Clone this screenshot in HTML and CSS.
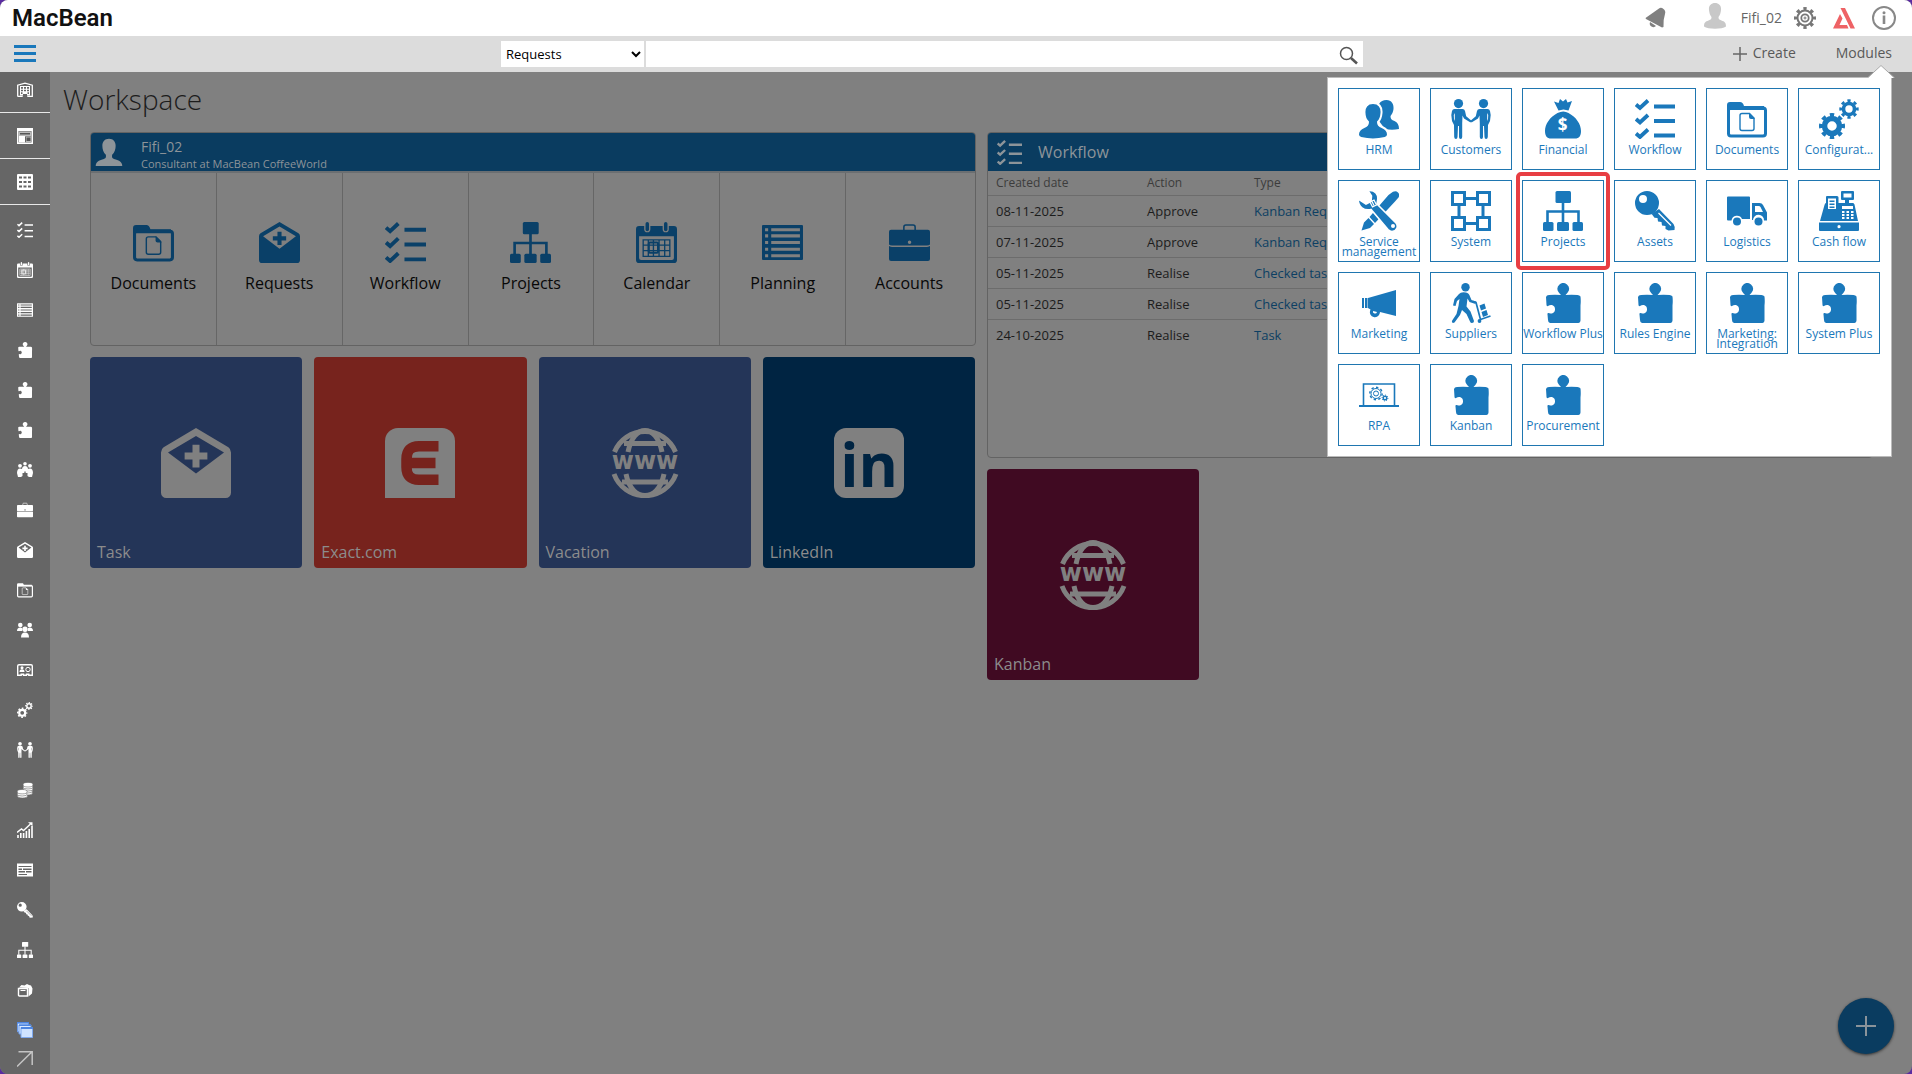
FILE: index.html
```
<!DOCTYPE html>
<html lang="en">
<head>
<meta charset="utf-8">
<title>MacBean - Workspace</title>
<link rel="stylesheet" href="styles.css">
</head>
<body>
<svg class="sprite" aria-hidden="true">
  <symbol id="i-check" viewBox="0 0 40 40"><g fill="none" stroke="currentColor" stroke-width="3.8"><path d="M1 5.5 5 9l8-7.5M1 20l4 3.500 8-7.500M1 34.500 5 38l8-7.500M19 7.500h21M19 22h21M19 36.500h21"/></g></symbol>
  <symbol id="i-folder" viewBox="0 0 40 40"><path fill="currentColor" d="M0 10V6a3 3 0 0 1 3-3h10c2 0 3 1 4 4h20v4H0z"/><rect x="1.500" y="9" width="37" height="28" rx="2.500" fill="none" stroke="currentColor" stroke-width="3"/><path d="M15 14.500h7.500l4.500 4.500v10.500a2 2 0 0 1-2 2H15a2 2 0 0 1-2-2v-13a2 2 0 0 1 2-2z" fill="none" stroke="currentColor" stroke-width="1.400"/><path fill="currentColor" d="M22 14l6 6h-4a2 2 0 0 1-2-2z"/></symbol>
  <symbol id="i-mail" viewBox="0 0 40 40"><path fill="currentColor" fill-rule="evenodd" d="M20 0 38.500 11Q40 12 40 14v23a3 3 0 0 1-3 3H3a3 3 0 0 1-3-3V14q0-2 1.500-3zM20 4.500 4 14l16 12 16-12zM18 9.500h4V14h4.500v4H22v4.500h-4V18h-4.500v-4H18z"/></symbol>
  <symbol id="i-org" viewBox="0 0 40 40"><g fill="currentColor"><rect x="12.500" width="15.500" height="12" rx="1.500"/><rect y="31" width="10.500" height="9" rx="1.500"/><rect x="14" y="31" width="12" height="9" rx="1.500"/><rect x="29.500" y="31" width="10.500" height="9" rx="1.500"/></g><path d="M20 11v21M4.500 32V20.500h31V32" fill="none" stroke="currentColor" stroke-width="2.600"/></symbol>
  <symbol id="i-calendar" viewBox="0 0 40 40"><path fill="currentColor" fill-rule="evenodd" d="M3 4h5v3a3 3 0 0 0 6 0V4h12v3a3 3 0 0 0 6 0V4h5a3 3 0 0 1 3 3v30a3 3 0 0 1-3 3H3a3 3 0 0 1-3-3V7a3 3 0 0 1 3-3zm0 10v21a2 2 0 0 0 2 2h30a2 2 0 0 0 2-2V14z"/><rect x="9.300" width="3.400" height="9" rx="1.700" fill="currentColor"/><rect x="27.300" width="3.400" height="9" rx="1.700" fill="currentColor"/><path d="M7 17.500h26v16H7zM7 22.500h26M7 28h26M12 17.500v16M17 17.500v16M22.500 17.500v16M28 17.500v16" fill="none" stroke="currentColor" stroke-width="1.300"/><rect x="12.500" y="20" width="9" height="10" rx="1" fill="none" stroke="currentColor" stroke-width="2"/></symbol>
  <symbol id="i-list" viewBox="0 0 40 40"><path fill="currentColor" fill-rule="evenodd" d="M1 3h38q1 0 1 1v32q0 1-1 1H1q-1 0-1-1V4q0-1 1-1zM3 6v3h3V6zm6 0v3h28V6zM3 12v3h3v-3zm6 0v3h28v-3zM3 18.500v3h3v-3zm6 0v3h28v-3zM3 25v3h3v-3zm6 0v3h28v-3zM3 31.500v3h3v-3zm6 0v3h28v-3z"/></symbol>
  <symbol id="i-case" viewBox="0 0 40 40"><path d="M14.500 8V5q0-2 2-2h7q2 0 2 2v3" fill="none" stroke="currentColor" stroke-width="1.500"/><path fill="currentColor" fill-rule="evenodd" d="M2 7.500h36a2 2 0 0 1 2 2V22q-1 1-3 1H3q-2 0-3-1V9.500a2 2 0 0 1 2-2zM20 18a1.700 1.700 0 1 0 .1 3.400A1.700 1.700 0 0 0 20 18z"/><path fill="currentColor" d="M0 23.500q2 1 3 1h34q1 0 3-1V36a2 2 0 0 1-2 2H2a2 2 0 0 1-2-2z"/></symbol>
  <symbol id="i-person" viewBox="0 0 40 40"><path fill="currentColor" d="M20 1c6 0 9.500 4 9.500 10 0 5-1.500 10-5 13-.5 4 0 5 4 6.500 6 2 10 3 10.500 9.500H1c.5-6.500 4.500-7.500 10.500-9.500 4-1.500 4.500-2.500 4-6.500-3.500-3-5-8-5-13C10.500 5 14 1 20 1z"/></symbol>
  <symbol id="i-hrm" viewBox="0 0 40 40"><path fill="currentColor" d="M27.500 1c5 0 7.500 4 7 9-.3 3-1.500 5-3 7 0 3 1 4 4 5 3 1.500 4.500 4 4.500 8-5 1-9 1-14 0l-6-8V5c2-3 4-4 7.500-4z"/><path fill="currentColor" stroke="var(--cut)" stroke-width="2" d="M14 4c6 0 9 4 8.500 10-.3 4-1.500 7-3.500 9 0 3 1 4 4 5 4 1.500 6 3.500 6 7.500 0 2.500-1 3-3 3.500-8 2-16 2-24 0-2-.5-3-1-3-3.500 0-4 2-6 6-7.500 3-1 4-2 4-5-2-2-3.500-5-3.500-9C5 8 8 4 14 4z"/></symbol>
  <symbol id="i-customers" viewBox="0 0 40 40"><g id="half-pair" fill="currentColor"><circle cx="7.500" cy="4.600" r="4.600"/><path d="M3.500 10h8q2 0 2.500 2l1.200 5.300 5.300 4.500-1 1.800-6.500-4-1.500-3-.3 8V38q0 2-1.600 2T8 38V27H7l-.5 11q-.1 2-1.600 2T3.200 38L3 26l-2-4-.7-6L1 12q.5-2 2.500-2zm-.7 6 .2 4 .8 2v-8z"/></g><use href="#half-pair" transform="matrix(-1 0 0 1 40 0)"/></symbol>
  <symbol id="i-gears" viewBox="0 0 40 40"><g fill="none" stroke="currentColor"><circle cx="13" cy="27" r="7.500" stroke-width="5.500"/><circle cx="13" cy="27" r="11.300" stroke-width="3.400" pathLength="16" stroke-dasharray="1 1" stroke-dashoffset=".5"/><circle cx="30" cy="10" r="5.500" stroke-width="3.600"/><circle cx="30" cy="10" r="8.300" stroke-width="2.800" pathLength="16" stroke-dasharray="1 1" stroke-dashoffset=".5"/></g></symbol>
  <symbol id="i-service" viewBox="0 0 40 40"><path fill="currentColor" d="M29.500 4 34 .8q3-1.300 5 .7t.5 5l-3.500 4L16 32l-5.500-6zM9.500 27l5.500 6-4 4-8.500 2.500L5 31.500z"/><path fill="currentColor" stroke="var(--cut)" stroke-width="1.600" d="M9-.5c7-1 11 4 9.500 10.500l-.5 3 19 19c2.500 3 1 8.500-4 8.500-2 0-3-1-4-2L12 18.500C5 20-1 16-.8 8L7 13l5-2.500L12.500 5z"/><circle cx="34" cy="35" r="2" fill="var(--cut)"/><path d="M11 11l4-2 2.500 5-4 2zM13 10.500l2 4" fill="none" stroke="var(--cut)" stroke-width="1.200"/></symbol>
  <symbol id="i-system" viewBox="0 0 40 40"><g fill="none" stroke="currentColor" stroke-width="3"><path d="M1.500 1.500h12v12h-12zM26.500 1.500h12v12h-12zM1.500 26.500h12v12h-12zM26.500 26.500h12v12h-12zM13 7.500h14M13 32.500h14M8 13v14M32 13v14"/></g></symbol>
  <symbol id="i-key" viewBox="0 0 40 40"><path fill="currentColor" fill-rule="evenodd" d="M12 0a12 12 0 1 1 0 24 12 12 0 0 1 0-24zM8 4a4 4 0 1 0 0 8 4 4 0 0 0 0-8z"/><path fill="currentColor" d="M24 18l14.500 15q1.500 2 1 6l-6 .5-3-1.500v-3l-3.500-.5-.5-3.500-3.500-.5-.5-3.500-3-.3-3-4z"/><path d="M23.500 22 36 34.500" stroke="var(--cut)" stroke-width="1.300"/></symbol>
  <symbol id="i-truck" viewBox="0 0 40 40"><path fill="currentColor" d="M1 5.500h21q1 0 1 1V28h-8a5.500 5.500 0 0 0-10.500 1.500H1q-1 0-1-1v-22q0-1 1-1z"/><path fill="currentColor" fill-rule="evenodd" d="M25 12h7.500q2.500 0 3.500 2l4 7.500v8h-3A5.500 5.500 0 0 0 26 29h-1zm3 3v6h8l-2.500-5q-.5-1-2-1z"/><circle cx="10" cy="30.500" r="4" fill="currentColor"/><circle cx="31.500" cy="30.500" r="4" fill="currentColor"/></symbol>
  <symbol id="i-cash" viewBox="0 0 40 40"><path fill="currentColor" fill-rule="evenodd" d="M23 0h11q1 0 1 1v7q0 1-1 1h-4v3h4q1 0 1.500 1.500L39 30H1l4.500-16Q6 12 7 12V6q0-1 1-1h10q1.500 0 1.500 1.500V12H26V9h-3q-1 0-1-1V1q0-1 1-1zm1.500 2.500v4h8v-4zM9 7.500V18h8V7.500zm1.500 2h5V11h-5zm0 3h5V14h-5zm0 3h5V17h-5zM23 15v3h11v-3zm0 5v2h2.500v-2zm4.500 0v2H30v-2zm4.500 0v2h2.500v-2zm-9 3v2h2.500v-2zm4.500 0v2H30v-2zm4.500 0v2h2.500v-2zm-9 3v2h2.500v-2zm4.500 0v2H30v-2zm4.500 0v2h2.500v-2z"/><path fill="currentColor" fill-rule="evenodd" d="M0 31.500h40V39q0 1-1 1H1q-1 0-1-1zm20 2.500a1.600 1.600 0 1 0 .1 3.200A1.600 1.600 0 0 0 20 34z"/></symbol>
  <symbol id="i-horn" viewBox="0 0 40 40"><path fill="currentColor" d="M3 15h2v10H3zM6 15h2.500v10H6zM9 15 37 7v26l-16-4-.3 1.500A5 5 0 0 1 11 28l.5-1.500L9 25z"/><path fill="var(--cut)" d="M14 28l4 1a2 2 0 0 1-4-1z"/></symbol>
  <symbol id="i-supply" viewBox="0 0 40 40"><g fill="currentColor"><circle cx="14.500" cy="4.200" r="4.200"/><path d="M8 11q2-2.500 7-1.500 3 .5 4 4l1.500 3.500 4.500 1.500-.5 2.500-6-2-2-3.500-1 8 4 5 3.500 9.500q0 2-2 2-1.500 0-2-1.500L15.500 31 11 27 9 32l-5.500 7.500Q1.500 40.500 1 39q-.3-1 .5-2l4-6L7.500 23 8.500 16 6 18 4.500 23l-2.500-.5L3.500 16z"/><path d="M28.500 22.500l5-2 1.500 5-5 2zM30.500 29l5-2 1.500 5-5 2z"/><circle cx="28.500" cy="38" r="1.900"/></g><path d="M22 18.500l3 1 4.500 17 10-3.500" fill="none" stroke="currentColor" stroke-width="1.700"/></symbol>
  <symbol id="i-puzzle" viewBox="0 0 40 40"><path fill="currentColor" d="M6 12q6-.5 12 0-2-2-2.500-3a5.700 5.700 0 1 1 9.500 0q-.5 1-2.500 3 6-.5 12 0 2 0 3 1.500.5 5 0 9v15q0 2-2 2.500H7q-2-.5-2-3l-.5-5.500q-.3-1.700 1-1.500 2 .5 3.500.5a4.500 4.500 0 0 0 0-8.500q-2-.5-4 1-1.500.5-1.500-1L3 14q.5-2 3-2z"/></symbol>
  <symbol id="i-rpa" viewBox="0 0 40 40"><g fill="none" stroke="currentColor"><path d="M4.500 30V9h31v21" stroke-width="1.600"/><path d="M0 31h40" stroke-width="2"/><circle cx="17" cy="18.500" r="5" stroke-width="1"/><circle cx="17" cy="18.500" r="2.500" stroke-width="1"/><circle cx="17" cy="18.500" r="6.200" stroke-width="1.400" pathLength="16" stroke-dasharray="1 1"/><circle cx="26" cy="23" r="1.800" stroke-width="1.400"/><circle cx="26" cy="23" r="2.900" stroke-width="1" pathLength="16" stroke-dasharray="1 1"/></g></symbol>
  <symbol id="i-building" viewBox="0 0 16 16"><path d="M.7 14.400V3.200L8 1.200l7.300 2v11.200h-5M.7 14.400h5" fill="none" stroke="currentColor" stroke-width="1.300"/><path fill="currentColor" fill-rule="evenodd" d="M3 4h10v9.500h-3V12H6v1.500H3zm1 1v1.700h2V5zm3 0v1.700h2V5zm3 0v1.700h2V5zM4 7.700v1.600h2V7.700zm3 0v1.600h2V7.700zm3 0v1.600h2V7.700zm-6 2.600V12h1.500v-1.700zm6.500 0V12H12v-1.700z"/></symbol>
  <symbol id="i-page" viewBox="0 0 16 16"><path fill="currentColor" fill-rule="evenodd" d="M0 0h16v16H0zM1.500 3v11.500h13V3z"/><path fill="#bbb" d="M2 3.500h12v5H2zM9 9h5v5H9z"/><path fill="#555" d="M3 5h10v1.500H3zM9.500 9.500h4V13h-4z"/><path fill="currentColor" d="M2 8h6v6.500H2z"/></symbol>
  <symbol id="i-grid" viewBox="0 0 16 16"><path fill="currentColor" fill-rule="evenodd" d="M1 0h14q1 0 1 1v14q0 1-1 1H1q-1 0-1-1V1q0-1 1-1zm1 2.500v2h3v-2zm4.500 0v2h3v-2zm4.500 0v2h3v-2zM2 7v2h3V7zm4.500 0v2h3V7zM11 7v2h3V7zm-9 4.500v2h3v-2zm4.500 0v2h3v-2zm4.500 0v2h3v-2z"/></symbol>
  <symbol id="i-team" viewBox="0 0 16 16"><g fill="currentColor"><circle cx="8" cy="1.800" r="1.800"/><circle cx="3" cy="3.800" r="1.900"/><circle cx="13" cy="3.800" r="1.900"/><path d="M8 4c2 0 3 1.500 3 3l2-.5c2 0 3 2 3 4.500l-1 4h-3l-1.500-1V11H8.700V9.500H7.300V11H5.500v3L4 15H1l-1-4c0-2.500 1-4.500 3-4.500l2 .5c0-1.500 1-3 3-3z"/></g></symbol>
  <symbol id="i-group" viewBox="0 0 16 16"><g fill="currentColor"><circle cx="3.300" cy="3" r="2.300"/><circle cx="12.700" cy="3" r="2.300"/><path d="M0 9q0-3.500 3.300-3.500L5 6v3zM16 9q0-3.500-3.300-3.500L11 6v3z"/><circle cx="8" cy="7.300" r="2.700"/><path d="M4 15.500q0-5 4-5t4 5z"/></g></symbol>
  <symbol id="i-card" viewBox="0 0 16 16"><path d="M2 2.700h12q1.300 0 1.300 1.300v9.300h-3.500v-1H9.500v1h-3v-1H4.200v1H.7V4Q.7 2.700 2 2.700z" fill="none" stroke="currentColor" stroke-width="1.400"/><circle cx="5" cy="5.700" r="1.500" fill="currentColor"/><path fill="currentColor" d="M2.500 10q0-2.700 2.500-2.700T7.500 10z"/><circle cx="11" cy="7.500" r="2.200" fill="none" stroke="currentColor"/></symbol>
  <symbol id="i-coins" viewBox="0 0 16 16"><g fill="currentColor" stroke="#666" stroke-width=".6"><ellipse cx="10.500" cy="11" rx="5" ry="2"/><ellipse cx="10.500" cy="9" rx="5" ry="2"/><ellipse cx="11" cy="7" rx="5" ry="2"/><ellipse cx="11" cy="5" rx="5" ry="2"/><ellipse cx="11" cy="2.700" rx="5" ry="2.300"/><ellipse cx="5.500" cy="14" rx="5" ry="2"/><ellipse cx="5.200" cy="12" rx="5" ry="2"/><ellipse cx="5.200" cy="9.700" rx="5" ry="2.200"/></g></symbol>
  <symbol id="i-chart" viewBox="0 0 16 16"><path d="M1 16v-3M3.800 16v-5M6.600 16v-5M9.400 16v-7M12.200 16V7M15 16V4" stroke="currentColor" stroke-width="1.600"/><path d="M0 10.500 4.500 7l2 1.500L13.500 2" fill="none" stroke="currentColor" stroke-width="1.400"/><path fill="currentColor" d="M11 .3h4.500v4z"/></symbol>
  <symbol id="i-table" viewBox="0 0 16 16"><path fill="currentColor" fill-rule="evenodd" d="M0 1.500h16v13H0zM1.500 4v1h13V4zm0 2.500V8H5V6.500zM6 6.500V8h8.500V6.500zM1.500 9v1.500H8V9zM9 9v1.500h5.500V9zm-7.500 3v1H10v-1z"/></symbol>
  <symbol id="i-pocket" viewBox="0 0 16 16"><path d="M1.500 6.500h9V14h-8q-1 0-1-1z" fill="none" stroke="currentColor" stroke-width="1.400"/><path fill="currentColor" d="M2 5.500 4.500 3l3 .5L10 2l2 1 2 .5 1.500 3-.5 5-3.500 3V6zM3.500 8h5v1h-5z"/></symbol>
  <symbol id="i-windows" viewBox="0 0 16 16"><path fill="#dcebff" stroke="#6b9bea" d="M.5.800h11v9H.5z"/><path fill="#dcebff" stroke="#6b9bea" d="M2 3h12v9H2z"/><path fill="#cfe3ff" stroke="#7fa9ee" d="M4 5.500h11.500v10H4z"/><path fill="#4f86e0" d="M0 0h12v1.500H0zM2 2.500h12V4H2zM4 5h12v2H4z"/></symbol>
  <symbol id="i-out" viewBox="0 0 16 16"><path d="M0 15.500 15 .8M1.500.800H15.200V14" fill="none" stroke="#c4c4c4" stroke-width="1.500"/></symbol>
  <symbol id="i-globe" viewBox="0 0 70 70"><g fill="none" stroke="currentColor" stroke-width="5"><path d="M4.500 24A33 33 0 0 1 65.500 24M4 46a33 33 0 0 0 62 0M14 15.500h42M12 54h46"/><path d="M18 24C21 9 28 2.500 35 2.500S49 9 52 24M16 46c3 15 11 21.500 19 21.500S51 61 54 46"/></g></symbol>
  <symbol id="i-exact" viewBox="0 0 70 70"><path fill="currentColor" d="M0 70V13A13 13 0 0 1 13 0h44a13 13 0 0 1 13 13v57z"/><path fill="none" stroke="var(--cut)" stroke-width="10.500" d="M53.500 18.200H34Q21.500 18.200 21.500 31v8Q21.500 51.800 34 51.800h19.500M23 35h27.500"/></symbol>
  <symbol id="i-plus" viewBox="0 0 20 20"><path d="M10 0v20M0 10h20" stroke="currentColor" stroke-width="2"/></symbol>
</svg>

<div class="app">
  <header class="top">
    <a class="brand" href="#">MacBean</a>
    <div class="tools">
      <button class="tool" aria-label="Notifications"><svg width="22" height="22" viewBox="0 0 22 22"><path fill="#808080" d="M.5 11 14 1.500q2-1.500 4.500.5 2.500 2 1.500 5-2 6-1.500 13l-1.500.5L1 12zM5 15l6 4q-2 2-4.500.5T5 15z"/></svg></button>
      <button class="user"><svg width="22" height="26" viewBox="0 0 22 26"><path fill="#c8c8c8" d="M11 0c4 0 6.500 3 6 7-.3 3-1 5-2.500 7 0 2 .5 2.500 3 3.500 3 1 4.500 2 4.500 6-4 3-18 3-22 0 0-4 1.500-5 4.500-6 2.500-1 3-1.500 3-3.500C6 12 5.300 10 5 7c-.5-4 2-7 6-7z"/></svg><span>Fifi_02</span></button>
      <button class="tool" aria-label="Settings"><svg width="22" height="22" viewBox="0 0 22 22" fill="none" stroke="#777"><circle cx="11" cy="11" r="7.500" stroke-width="2"/><circle cx="11" cy="11" r="9.500" stroke-width="3" pathLength="16" stroke-dasharray=".9 1.100" stroke-dashoffset=".45"/><circle cx="11" cy="11" r="3.700" stroke-width="1.800"/><circle cx="11" cy="11" r="1" stroke-width="1"/></svg></button>
      <button class="tool" aria-label="Assistant"><svg width="22" height="22" viewBox="0 0 22 22"><path fill="#ee6265" d="M7.500 1h4.500L22 21.500h-4.500zM7 7l2.500 4.500L6.500 18H14l1.500 3.500H0z"/></svg></button>
      <button class="tool" aria-label="Information"><svg width="24" height="24" viewBox="0 0 24 24"><circle cx="12" cy="12" r="11" fill="none" stroke="#888" stroke-width="2"/><circle cx="12" cy="6.700" r="1.500" fill="#888"/><path d="M12 9.500V18" stroke="#888" stroke-width="2.600"/></svg></button>
    </div>
  </header>

  <div class="bar">
    <button class="burger" aria-label="Menu"><svg width="22" height="17" viewBox="0 0 22 17"><path d="M0 1.500h22M0 8.500h22M0 15.500h22" stroke="#1a78bb" stroke-width="3"/></svg></button>
    <form class="search">
      <select aria-label="Search in"><option>Requests</option></select>
      <input type="text" aria-label="Search">
      <button type="button" aria-label="Search"><svg width="20" height="20" viewBox="0 0 20 20" fill="none" stroke="#555"><circle cx="7.500" cy="7.500" r="6" stroke-width="1.500"/><path d="M12 12l6 5.500" stroke-width="2.600"/></svg></button>
    </form>
    <div class="actions">
      <button class="create"><svg width="14" height="14" viewBox="0 0 14 14"><path d="M7 0v14M0 7h14" stroke="#666" stroke-width="1.500"/></svg>Create</button>
      <div class="modules">
        <button>Modules</button>
        <div class="panel">
          <svg class="caret" width="28" height="13" viewBox="0 0 28 13"><path fill="#fff" stroke="#aaa" d="M.5 13 14 .5 27.500 13"/></svg>
          <a href="#"><svg><use href="#i-hrm"/></svg><span>HRM</span></a>
          <a href="#"><svg><use href="#i-customers"/></svg><span>Customers</span></a>
          <a href="#"><svg viewBox="0 0 40 40"><path fill="currentColor" d="M11 2.500l4.500 1.500L17 0l3 2.500L23 0l1.500 3.500L29 2l-3.500 9.500-5-1-5 1zM14.500 14q6-3 11 0C33 18 38 25 38 32c0 5-2 7.500-6 7.500H8c-4 0-6-2.500-6-7.500 0-7 5-14 12.500-18z"/><text x="19.500" y="32" class="glyph-money" text-anchor="middle">$</text></svg><span>Financial</span></a>
          <a href="#"><svg><use href="#i-check"/></svg><span>Workflow</span></a>
          <a href="#"><svg><use href="#i-folder"/></svg><span>Documents</span></a>
          <a href="#"><svg><use href="#i-gears"/></svg><span>Configurat...</span></a>
          <a href="#"><svg><use href="#i-service"/></svg><span>Service management</span></a>
          <a href="#"><svg><use href="#i-system"/></svg><span>System</span></a>
          <a href="#" class="marked"><svg><use href="#i-org"/></svg><span>Projects</span></a>
          <a href="#"><svg><use href="#i-key"/></svg><span>Assets</span></a>
          <a href="#"><svg><use href="#i-truck"/></svg><span>Logistics</span></a>
          <a href="#"><svg><use href="#i-cash"/></svg><span>Cash flow</span></a>
          <a href="#"><svg><use href="#i-horn"/></svg><span>Marketing</span></a>
          <a href="#"><svg><use href="#i-supply"/></svg><span>Suppliers</span></a>
          <a href="#"><svg><use href="#i-puzzle"/></svg><span>Workflow Plus</span></a>
          <a href="#"><svg><use href="#i-puzzle"/></svg><span>Rules Engine</span></a>
          <a href="#"><svg><use href="#i-puzzle"/></svg><span>Marketing: Integration</span></a>
          <a href="#"><svg><use href="#i-puzzle"/></svg><span>System Plus</span></a>
          <a href="#"><svg><use href="#i-rpa"/></svg><span>RPA</span></a>
          <a href="#"><svg><use href="#i-puzzle"/></svg><span>Kanban</span></a>
          <a href="#"><svg><use href="#i-puzzle"/></svg><span>Procurement</span></a>
        </div>
      </div>
    </div>
  </div>

  <div class="body">
    <nav class="side" aria-label="Main">
      <a class="lead first" href="#" aria-label="Company"><svg><use href="#i-building"/></svg></a>
      <a class="lead" href="#" aria-label="Workspace"><svg><use href="#i-page"/></svg></a>
      <a class="lead" href="#" aria-label="Overview"><svg><use href="#i-grid"/></svg></a>
      <div class="links">
        <a href="#" aria-label="Workflow"><svg><use href="#i-check"/></svg></a>
        <a href="#" aria-label="Calendar"><svg><use href="#i-calendar"/></svg></a>
        <a href="#" aria-label="Planning"><svg><use href="#i-list"/></svg></a>
        <a href="#" aria-label="Add-on 1"><svg><use href="#i-puzzle"/></svg></a>
        <a href="#" aria-label="Add-on 2"><svg><use href="#i-puzzle"/></svg></a>
        <a href="#" aria-label="Add-on 3"><svg><use href="#i-puzzle"/></svg></a>
        <a href="#" aria-label="Team"><svg><use href="#i-team"/></svg></a>
        <a href="#" aria-label="Accounts"><svg><use href="#i-case"/></svg></a>
        <a href="#" aria-label="Requests"><svg><use href="#i-mail"/></svg></a>
        <a href="#" aria-label="Documents"><svg><use href="#i-folder"/></svg></a>
        <a href="#" aria-label="Groups"><svg><use href="#i-group"/></svg></a>
        <a href="#" aria-label="Contacts"><svg><use href="#i-card"/></svg></a>
        <a href="#" aria-label="Configuration"><svg><use href="#i-gears"/></svg></a>
        <a href="#" aria-label="Customers"><svg><use href="#i-customers"/></svg></a>
        <a href="#" aria-label="Financial"><svg><use href="#i-coins"/></svg></a>
        <a href="#" aria-label="Reports"><svg><use href="#i-chart"/></svg></a>
        <a href="#" aria-label="Lists"><svg><use href="#i-table"/></svg></a>
        <a href="#" aria-label="Assets"><svg><use href="#i-key"/></svg></a>
        <a href="#" aria-label="Projects"><svg><use href="#i-org"/></svg></a>
        <a href="#" aria-label="Wallet"><svg><use href="#i-pocket"/></svg></a>
        <a href="#" aria-label="Windows"><svg><use href="#i-windows"/></svg></a>
      </div>
      <a class="out" href="#" aria-label="Open"><svg><use href="#i-out"/></svg></a>
    </nav>

    <main>
      <h1>Workspace</h1>
      <div class="columns">
        <div class="column">
          <section class="widget profile">
            <header><svg><use href="#i-person"/></svg><div><strong>Fifi_02</strong><small>Consultant at MacBean CoffeeWorld</small></div></header>
            <div class="shortcuts">
              <a href="#"><svg><use href="#i-folder"/></svg>Documents</a>
              <a href="#"><svg><use href="#i-mail"/></svg>Requests</a>
              <a href="#"><svg><use href="#i-check"/></svg>Workflow</a>
              <a href="#"><svg><use href="#i-org"/></svg>Projects</a>
              <a href="#"><svg><use href="#i-calendar"/></svg>Calendar</a>
              <a href="#"><svg><use href="#i-list"/></svg>Planning</a>
              <a href="#"><svg><use href="#i-case"/></svg>Accounts</a>
            </div>
          </section>
          <div class="tiles">
            <a class="tile blue" href="#"><svg><use href="#i-mail"/></svg><span>Task</span></a>
            <a class="tile red" href="#"><svg><use href="#i-exact"/></svg><span>Exact.com</span></a>
            <a class="tile blue" href="#"><svg viewBox="0 0 70 70"><use href="#i-globe"/><text x="35" y="41" text-anchor="middle" class="glyph-web">www</text></svg><span>Vacation</span></a>
            <a class="tile navy" href="#"><svg viewBox="0 0 70 70"><rect width="70" height="70" rx="12" fill="currentColor"/><text x="35" y="59" text-anchor="middle" class="glyph-linked">in</text></svg><span>LinkedIn</span></a>
          </div>
        </div>
        <div class="column">
          <section class="widget workflow">
            <header><svg><use href="#i-check"/></svg><h2>Workflow</h2></header>
            <table>
              <thead><tr><th class="date">Created date</th><th class="action">Action</th><th>Type</th></tr></thead>
              <tbody>
                <tr><td>08-11-2025</td><td>Approve</td><td><a href="#">Kanban Request</a></td></tr>
                <tr><td>07-11-2025</td><td>Approve</td><td><a href="#">Kanban Request</a></td></tr>
                <tr><td>05-11-2025</td><td>Realise</td><td><a href="#">Checked task</a></td></tr>
                <tr><td>05-11-2025</td><td>Realise</td><td><a href="#">Checked task</a></td></tr>
                <tr><td>24-10-2025</td><td>Realise</td><td><a href="#">Task</a></td></tr>
              </tbody>
            </table>
          </section>
          <div class="tiles">
            <a class="tile wine" href="#"><svg viewBox="0 0 70 70"><use href="#i-globe"/><text x="35" y="41" text-anchor="middle" class="glyph-web">www</text></svg><span>Kanban</span></a>
          </div>
        </div>
      </div>
    </main>
  </div>
  <button class="fab" aria-label="Add"><svg width="20" height="20"><use href="#i-plus"/></svg></button>
</div>
</body>
</html>
```
FILE: styles.css
```
* { box-sizing: border-box; }
html { background: #5a2ca0; }
body {
  margin: 0;
  font-family: "Open Sans", "Noto Sans", sans-serif;
  font-size: 14px;
  --cut: #fff;
}
a { color: inherit; text-decoration: none; }
button { border: 0; padding: 0; background: none; font: inherit; color: inherit; cursor: pointer; }
svg { display: block; flex: none; }
.sprite { display: none; }

.app {
  display: flex;
  flex-direction: column;
  min-height: 100vh;
  border-radius: 8px;
  overflow: hidden;
  background: #808080;
}

/* Top strip */
.top {
  display: flex;
  align-items: center;
  justify-content: space-between;
  height: 36px;
  padding: 0 16px 0 12px;
  background: #fff;
}
.brand { font: 600 24px/36px Roboto, sans-serif; color: #111; }
.tools { display: flex; align-items: center; gap: 17px; color: #666; }
.tool { display: flex; }
.user { display: flex; align-items: center; gap: 15px; margin-left: 20px; margin-right: -5px; }
.user svg { margin-bottom: 4px; }
.user span { padding-bottom: 2px; }

/* Search bar */
.bar {
  display: grid;
  grid-template-columns: 501fr 862fr 549fr;
  align-items: center;
  height: 36px;
  background: #dcdcdc;
}
.burger { justify-self: start; padding: 0 14px 2px; }
.search { position: relative; display: flex; gap: 2px; height: 26px; }
.search select {
  width: 143px;
  border: 0;
  border-radius: 0;
  padding: 0 1px;
  background: #fff;
  color: #000;
  font: 13px "Open Sans", sans-serif;
}
.search input { flex: 1; min-width: 0; border: 0; padding: 0 32px 0 8px; background: #fff; font: inherit; }
.search button { position: absolute; right: 4px; top: 5px; }
.actions {
  display: flex;
  align-items: center;
  justify-content: flex-end;
  gap: 40px;
  height: 36px;
  padding-right: 20px;
  padding-bottom: 2px;
  color: #595959;
}
.create { display: flex; align-items: center; gap: 6px; line-height: 34px; }
.create svg { margin-top: 2px; }
.modules { position: relative; }
.modules > button { display: block; line-height: 34px; }

/* Module picker */
.panel {
  position: absolute;
  z-index: 5;
  top: 41px;
  right: 0;
  display: grid;
  grid-template-columns: repeat(6, 82px);
  gap: 10px;
  padding: 10px 11px 10px 10px;
  border: 1px solid #bbb;
  background: #fff;
  color: #1a78bb;
}
.caret { position: absolute; top: -13px; right: -4px; }
.panel a {
  position: relative;
  display: flex;
  flex-direction: column;
  align-items: center;
  gap: 6px;
  height: 82px;
  padding-top: 10px;
  border: 1px solid #1f76b0;
  font-size: 12px;
  line-height: 10px;
  text-align: center;
}
.panel a svg { width: 40px; height: 40px; }
.marked::after {
  content: "";
  position: absolute;
  inset: -9px -7px;
  border: 4px solid #e83e43;
  border-radius: 5px;
}
.glyph-money { font: 700 17px "Open Sans", sans-serif; fill: #fff; }

/* Side navigation */
.body { display: flex; flex: 1; }
.side { display: flex; flex-direction: column; width: 50px; flex: none; background: #666; color: #fff; --cut: #666; }
.side a { display: flex; align-items: center; justify-content: center; height: 40px; }
.side svg { width: 16px; height: 16px; }
.side .lead { height: 46px; border-bottom: 1px solid #e8e8e8; }
.side .first { height: 41px; padding-bottom: 5px; }
.links { padding-top: 5px; }
.side .out { height: 24px; padding-bottom: 6px; }

/* Workspace */
main { flex: 1; min-width: 0; }
h1 { margin: 0; padding: 7px 13px 0; font-size: 28px; font-weight: 300; line-height: 40px; color: #1c1c1c; }
.columns { display: grid; grid-template-columns: 1fr 1fr; gap: 11px; padding: 13px 39px 20px 40px; }
.column { display: flex; flex-direction: column; gap: 11px; min-width: 0; }
.widget { border: 1px solid #636363; border-radius: 4px; overflow: hidden; }
.widget header { display: flex; align-items: center; height: 38px; background: #0a3c60; color: #8d9499; }
.profile header { gap: 18px; padding-left: 4px; }
.profile header svg { width: 28px; height: 28px; }
.profile header div { display: flex; flex-direction: column; padding-top: 4px; }
.profile strong { font-size: 14px; font-weight: 400; line-height: 20px; }
.profile small { font-size: 11px; line-height: 14px; }
.shortcuts {
  display: grid;
  grid-template-columns: repeat(7, 1fr);
  height: 174px;
  padding-right: 3px;
  border-top: 2px solid #6b6f72;
}
.shortcuts a {
  display: flex;
  flex-direction: column;
  align-items: center;
  gap: 9px;
  padding-top: 49px;
  border-right: 1px solid #666;
  font-size: 16px;
  line-height: 22px;
  color: #080808;
}
.shortcuts a:last-child { border-right: 0; }
.shortcuts svg { width: 41px; height: 41px; color: #0a4068; }

.workflow { min-height: 326px; }
.workflow header { gap: 16px; padding-left: 9px; }
.workflow header svg { width: 25px; height: 25px; }
.workflow h2 { margin: 0; font-size: 16px; font-weight: 400; }
table { width: 100%; border-collapse: collapse; table-layout: fixed; }
th, td { padding: 0 8px; text-align: left; font-weight: 400; border-bottom: 1px solid #6c6c6c; }
th { height: 24px; font-size: 12px; color: #3c3c3c; }
td { height: 31px; font-size: 13px; color: #1c1c1c; }
tr:last-child td { border-bottom: 0; }
.date { width: 151px; }
.action { width: 107px; }
td a { color: #0c3f63; }

.tiles { display: grid; grid-template-columns: repeat(4, 1fr); gap: 12px; padding-right: 1px; }
.tile {
  position: relative;
  display: flex;
  align-items: center;
  justify-content: center;
  aspect-ratio: 212 / 211;
  border-radius: 4px;
  color: #808080;
}
.tile svg { width: 70px; height: 70px; }
.tile span { position: absolute; left: 7px; bottom: 5px; font-size: 16px; line-height: 22px; color: #8c8c8c; }
.blue { background: #243558; }
.red { background: #77231d; --cut: #77231d; }
.navy { background: #002442; }
.wine { background: #400a22; }
.glyph-web { font: 700 24px "DejaVu Sans", sans-serif; fill: currentColor; }
.glyph-linked { font: 700 60px "Open Sans", sans-serif; fill: #002442; }

.fab {
  position: fixed;
  right: 18px;
  bottom: 20px;
  display: flex;
  align-items: center;
  justify-content: center;
  width: 56px;
  height: 56px;
  border-radius: 50%;
  background: #0a3c60;
  color: #8a939a;
  box-shadow: 0 1px 3px #333;
}
```
